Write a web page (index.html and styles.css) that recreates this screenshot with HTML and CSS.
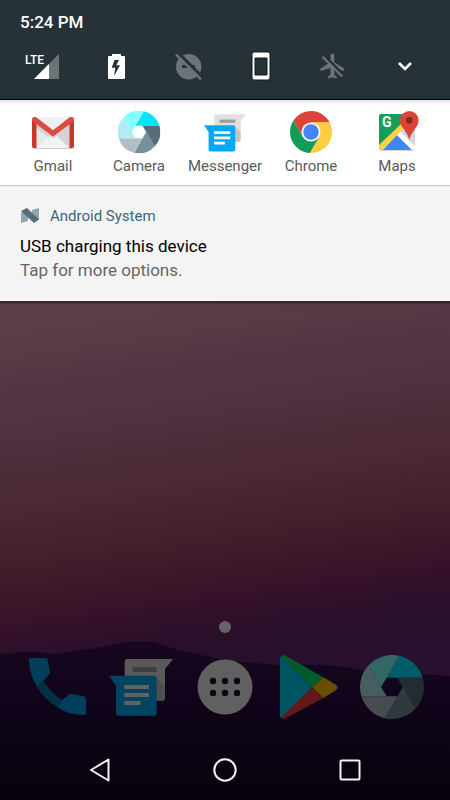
FILE: index.html
```html
<!DOCTYPE html>
<html lang="en">
<head>
<meta charset="UTF-8">
<meta name="viewport" content="width=device-width, initial-scale=1.0">
<title>Notification shade</title>
<link rel="stylesheet" href="styles.css">
</head>
<body>

<!-- Icons used both in the suggestions and in the dock -->
<svg class="symbols" aria-hidden="true">
    <symbol id="camera" viewBox="0 0 64 64">
        <path fill="#00e5ff" d="M26.7 22.7L39.2.8A32 32 0 0 1 62.6 22.7Z"/>
        <path fill="#546e7a" d="M37.3 22.7H62.6A32 32 0 0 1 55.4 53.8Z"/>
        <path fill="#78909c" d="M43 32L55.4 53.8A32 32 0 0 1 24.8 63.2L37.3 41.3Z"/>
        <path fill="#b0bec5" d="M37.3 41.3L24.8 63.2A32 32 0 0 1 1.4 41.3Z"/>
        <path fill="#b2ebf2" d="M26.7 41.3H1.4A32 32 0 0 1 8.6 10.2L21 32Z"/>
        <path fill="#84ffff" d="M21 32L8.6 10.2A32 32 0 0 1 39.2.8L26.7 22.7Z"/>
    </symbol>
    <symbol id="messenger" viewBox="0 0 64 57">
        <path fill="#e0e0e0" d="M18.7 0H64L56 10V38.7a3 3 0 0 1-3 3H15.7V3a3 3 0 0 1 3-3z"/>
        <path fill="#9e9e9e" d="M23.7 8h24v5h-24z"/>
        <path fill="#c4c4c4" d="M47.7 19l8 8v11.700a3 3 0 0 1-3 3h-5z"/>
        <path fill="#03a9f4" d="M0 16.700H44.700a3 3 0 0 1 3 3V53.700a3 3 0 0 1-3 3H10a3 3 0 0 1-3-3V27z"/>
        <path fill="#f5f5f5" d="M15.300 26H40v4H15.300zM15.300 34H40v4H15.300zM15.300 42H31.700v4H15.300z"/>
    </symbol>
</svg>

<div class="screen">
    <header class="quick-settings">
        <time class="clock">5:24 PM</time>
        <div class="tiles">
            <button class="tile" aria-label="Mobile data">
                <svg width="40" height="32" viewBox="0 0 40 32">
                    <path fill="#6d7478" d="M9 29L34 4V29z"/>
                    <path fill="#fff" d="M9 29L24 14V29z"/>
                    <text class="network" x="0" y="14">LTE</text>
                </svg>
            </button>
            <button class="tile" aria-label="Battery">
                <svg width="32" height="32" viewBox="0 0 32 32">
                    <path fill="#fff" fill-rule="evenodd" d="M11 4h9v2h3a1 1 0 0 1 1 1v21a1 1 0 0 1-1 1H8a1 1 0 0 1-1-1V7a1 1 0 0 1 1-1h3zM13.500 10L10.700 17.700H14.300L13 26L19 15.300H15.300L18 10z"/>
                </svg>
            </button>
            <button class="tile" aria-label="Do not disturb">
                <svg width="32" height="32" viewBox="0 0 32 32">
                    <circle cx="15.700" cy="16.700" r="12.700" fill="#6d7478"/>
                    <path fill="#263238" d="M9 15h13v3H9z"/>
                    <path stroke="#263238" stroke-width="5" d="M4.500 3.500L29 28"/>
                    <path stroke="#6d7478" stroke-width="2.400" d="M3 4.300L28 29.300"/>
                </svg>
            </button>
            <button class="tile" aria-label="Auto-rotate">
                <svg width="32" height="32" viewBox="0 0 32 32">
                    <path fill="#fff" stroke="#10181c" fill-rule="evenodd" d="M9 2h14a2 2 0 0 1 2 2v24a2 2 0 0 1-2 2H9a2 2 0 0 1-2-2V4a2 2 0 0 1 2-2zM10 8v17h12V8z"/>
                </svg>
            </button>
            <button class="tile" aria-label="Airplane mode">
                <svg width="30" height="30" viewBox="0 0 24 24">
                    <path fill="#6d7478" d="M13 9V3.500c0-.83-.67-1.500-1.500-1.500S10 2.670 10 3.500v3.680l7.830 7.830L21 16v-2l-8-5zM3 5.270l4.990 4.990L2 14v2l8-2.500V19l-2 1.500V22l3.500-1 3.500 1v-1.500L13 19v-3.730L18.730 21 20 19.730 4.270 4 3 5.270z"/>
                </svg>
            </button>
            <button class="tile" aria-label="Expand">
                <svg width="32" height="32" viewBox="0 0 32 32">
                    <path fill="none" stroke="#fff" stroke-width="2.600" d="M10 13L16 19L22 13"/>
                </svg>
            </button>
        </div>
    </header>

    <nav class="suggestions">
        <a class="app" href="#gmail">
            <svg width="44" height="44" viewBox="0 0 44 44">
                <rect x="1" y="8" width="42" height="31" rx="2" fill="#c9c9c9"/>
                <rect x="1" y="7" width="42" height="31" rx="2" fill="#e8e8e8"/>
                <path fill="#d4d4d4" d="M5 13L22 25L39 12V38H32L5 18z"/>
                <path fill="#f3f3f3" d="M5 38L18 26L22 28L26 26L38 38z"/>
                <path fill="#f0f0f0" d="M4 7H40L22 21z"/>
                <path fill="#c7372c" d="M1 9H5.500V38H3a2 2 0 0 1-2-2zM43 9H38.500V38H41a2 2 0 0 0 2-2z"/>
                <path fill="#dc4b3f" d="M1 9.500Q1 7 3.500 7H5L22 20.300L39 7H40.500Q43 7 43 9.500V11L22 26.500L1 11z"/>
            </svg>
            <span>Gmail</span>
        </a>
        <a class="app" href="#camera-app">
            <svg width="44" height="44" viewBox="-1 -1 66 66"><use href="#camera" width="64" height="64"/></svg>
            <span>Camera</span>
        </a>
        <a class="app" href="#messenger-app">
            <svg width="44" height="44" viewBox="0 0 44 44"><use href="#messenger" x="1" y="4" width="42" height="38"/></svg>
            <span>Messenger</span>
        </a>
        <a class="app" href="#chrome">
            <svg width="44" height="44" viewBox="0 0 44 44">
                <path fill="#db4437" d="M4.400 10.600A21 21 0 0 1 40.700 12.500H22L13.800 26.750Z"/>
                <path fill="#ffcd40" d="M40.700 12.500A21 21 0 0 1 20.900 43L30.200 26.750L22 12.500Z"/>
                <path fill="#0f9d58" d="M20.900 43A21 21 0 0 1 4.400 10.600L13.800 26.750H30.200Z"/>
                <circle cx="22" cy="22" r="9.600" fill="#f5f5f5"/>
                <circle cx="22" cy="22" r="7.700" fill="#4285f4"/>
            </svg>
            <span>Chrome</span>
        </a>
        <a class="app" href="#maps">
            <svg width="44" height="44" viewBox="0 0 44 44">
                <rect x="4" y="5" width="36" height="36" rx="2" fill="#d5d5d5"/>
                <path fill="#169d58" d="M6 4H36L28 17L4 39V6a2 2 0 0 1 2-2z"/>
                <path fill="#4285f4" d="M8 40L22 25L37 40z"/>
                <path fill="#fff" d="M22 25L25 21L40 36V38a2 2 0 0 1-2 2H37z"/>
                <path fill="#ffd040" d="M4 35L27 13L30 17L7 40H6a2 2 0 0 1-2-2z"/>
                <text class="maps-letter" x="7" y="17">G</text>
                <path fill="#db4437" d="M34.300 31C33.500 22 25 18 25 10.300a9.300 9.300 0 0 1 18.600 0C43.600 18 35 22 34.300 31z"/>
                <circle cx="34.300" cy="10.300" r="3.300" fill="#7b2a24"/>
            </svg>
            <span>Maps</span>
        </a>
    </nav>

    <section class="notification">
        <div class="source">
            <svg width="20" height="16" viewBox="0 0 20 16">
                <path fill="#90a4ae" d="M1 4L8 6V13L1 15zM12 2L19 0V12L12 12z"/>
                <path fill="#546e7a" d="M1 3L7 0L19 11.500L14 15z"/>
            </svg>
            <span>Android System</span>
        </div>
        <h1>USB charging this device</h1>
        <p>Tap for more options.</p>
    </section>

    <main class="home">
        <svg class="hills" viewBox="0 0 450 160" preserveAspectRatio="none" aria-hidden="true">
            <defs>
                <linearGradient id="night" x1="0" y1="0" x2="0" y2="1">
                    <stop offset="0" stop-color="#16071f"/>
                    <stop offset="0.400" stop-color="#10041a"/>
                    <stop offset="1" stop-color="#07010c"/>
                </linearGradient>
            </defs>
            <path fill="url(#night)" d="M0 14L22 12L40 12L53 14L90 9L127 2Q140 1 153 2L178 10L230 21L280 25L320 25Q345 25 365 31L385 32L450 36V160H0z"/>
        </svg>
        <div class="launcher">
            <span class="page-dot"></span>
            <nav class="dock">
                <a href="#phone" aria-label="Phone">
                    <svg width="58" height="58" viewBox="0 0 58 58">
                        <path fill="#039be5" d="M2 0H16.500Q18.500 0 19 3L21 15L14.300 22.700L8 29Q0 15 0 2Q0 0 2 0z"/>
                        <path fill="#039be5" d="M33.300 42L40 36.500Q41 35.600 43 36L54.500 38Q57 38.500 57 41V54.500Q57 57 54.500 57Q40 57 28 49z"/>
                        <path fill="#0277a8" d="M8 29L14.300 22.700Q22 35 33.300 42L28 49Q16 42 8 29z"/>
                    </svg>
                </a>
                <a href="#messenger-app" aria-label="Messenger">
                    <svg width="64" height="57"><use href="#messenger" width="64" height="57"/></svg>
                </a>
                <a href="#all-apps" aria-label="All apps">
                    <svg width="56" height="56" viewBox="0 0 56 56">
                        <circle cx="28" cy="28" r="27.500" fill="#f0f0f0"/>
                        <g fill="#20102e">
                            <circle cx="16" cy="22" r="3.200"/>
                            <circle cx="28" cy="22" r="3.200"/>
                            <circle cx="40" cy="22" r="3.200"/>
                            <circle cx="16" cy="34" r="3.200"/>
                            <circle cx="28" cy="34" r="3.200"/>
                            <circle cx="40" cy="34" r="3.200"/>
                        </g>
                    </svg>
                </a>
                <a href="#play-store" aria-label="Play Store">
                    <svg width="58" height="64" viewBox="0 0 58 64">
                        <path fill="#00d0f0" d="M0 3Q0 1 1.500 1L32.300 32.300L1.500 63Q0 63 0 61z"/>
                        <path fill="#00e06a" d="M1 1.500Q3-1 6 1L43.300 22.300L32.300 32.300z"/>
                        <path fill="#ff3a47" d="M1 62.500Q3 65 6 63L43.300 43L32.300 32.300z"/>
                        <path fill="#ffc800" d="M43.300 22.300L55.500 29.500Q59.500 32.300 55.500 35.500L43.300 43L32.300 32.300z"/>
                    </svg>
                </a>
                <a href="#camera-app" aria-label="Camera">
                    <svg width="64" height="64"><use href="#camera" width="64" height="64"/></svg>
                </a>
            </nav>
            <div class="system-bar">
                <button aria-label="Back">
                    <svg width="24" height="24" viewBox="0 0 24 24"><path d="M20.500 1.500V22.500L3 12z"/></svg>
                </button>
                <button aria-label="Home">
                    <svg width="24" height="24" viewBox="0 0 24 24"><circle cx="12" cy="12" r="10.700"/></svg>
                </button>
                <button aria-label="Overview">
                    <svg width="24" height="24" viewBox="0 0 24 24"><rect x="2.500" y="2.500" width="19" height="19" rx="1"/></svg>
                </button>
            </div>
        </div>
    </main>
</div>

</body>
</html>
```
FILE: styles.css
```css
* {
    box-sizing: border-box;
}
body {
    margin: 0;
    font-family: Roboto, "Noto Sans", sans-serif;
    background-color: #07010c;
}
button {
    padding: 0;
    border: none;
    background: none;
    cursor: pointer;
}
a {
    color: inherit;
    text-decoration: none;
}
svg {
    display: block;
}
.symbols {
    width: 0;
    height: 0;
    position: absolute;
}
.screen {
    display: flex;
    flex-direction: column;
    min-height: 100vh;
}

/* Quick settings */
.quick-settings {
    padding: 12px 0 17px;
    background-color: #263238;
    border-bottom: 1px solid #000;
    color: #fff;
}
.clock {
    display: block;
    padding: 0 20px;
    font-size: 17px;
    font-weight: 500;
    line-height: 20px;
}
.tiles {
    display: grid;
    grid-template-columns: repeat(6, 1fr);
    padding: 18px 9px 0;
}
.tile {
    display: flex;
    justify-content: center;
    align-items: center;
    height: 32px;
}
.network {
    font-family: "Liberation Sans Narrow", Roboto, sans-serif;
    font-size: 12px;
    font-weight: 500;
    fill: #fff;
}

/* Suggested apps */
.suggestions {
    display: grid;
    grid-template-columns: repeat(5, 1fr);
    padding: 10px 10px 9px;
    background: linear-gradient(#e4e4e4, #fff 5px);
    border-bottom: 1px solid #c8c8c8;
}
.app {
    display: flex;
    flex-direction: column;
    align-items: center;
    gap: 2px;
    color: #5a5a5a;
    font-size: 15px;
    line-height: 20px;
}
.maps-letter {
    font-size: 14px;
    font-weight: bold;
    fill: #fff;
}

/* Notification */
.notification {
    padding: 20px 20px 18px;
    background-color: #f4f4f4;
    border-bottom: 1px solid #fff;
}
.source {
    display: flex;
    align-items: center;
    gap: 10px;
    color: #3a6778;
    font-size: 15px;
    line-height: 20px;
}
.notification h1,
.notification p {
    margin: 0;
    font-size: 17px;
    font-weight: 400;
    line-height: 24px;
}
.notification h1 {
    margin-top: 8px;
    color: #000;
}
.notification p {
    color: #666;
}

/* Home screen, dimmed behind the shade */
.home {
    flex: 1;
    display: grid;
    align-items: end;
    background:
        linear-gradient(rgba(0, 0, 0, 0.5), transparent 4px),
        linear-gradient(172deg, #5f4049 0, #543443 100px, #4d2c3a 180px, #472330 240px, #3c1a29 290px, #34112a 330px, #280f2b 370px, #28102f 420px);
}
.hills,
.launcher {
    grid-area: 1 / 1;
}
.hills {
    width: 100%;
    height: 160px;
}
.launcher {
    display: flex;
    flex-direction: column;
}
.page-dot {
    align-self: center;
    width: 12px;
    height: 12px;
    margin-bottom: 22px;
    border-radius: 50%;
    background-color: #68626a;
}
.dock {
    display: grid;
    grid-template-columns: repeat(5, 1fr);
    align-items: center;
    justify-items: center;
    padding: 0 16px;
    filter: brightness(0.4);
}
.system-bar {
    display: grid;
    grid-template-columns: repeat(3, 1fr);
    padding: 39px 38px 18px;
}
.system-bar button {
    display: flex;
    justify-content: center;
}
.system-bar path,
.system-bar circle,
.system-bar rect {
    fill: none;
    stroke: #f2f2f2;
    stroke-width: 2;
    stroke-linejoin: round;
}
```
